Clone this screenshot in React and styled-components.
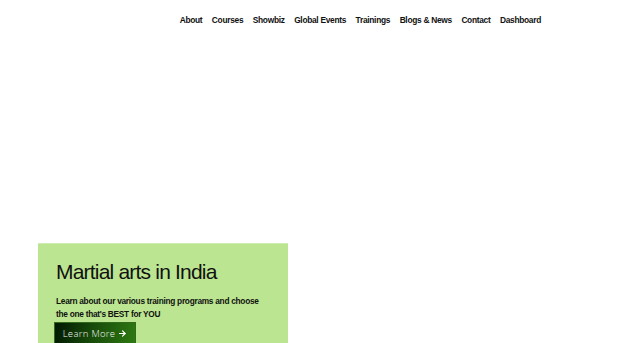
import React from "react";
import styled, { createGlobalStyle } from "styled-components";

const GlobalStyle = createGlobalStyle`
  html, body {
    margin: 0;
    padding: 0;
    background: #ffffff;
    font-family: "Liberation Sans", Arial, sans-serif;
    overflow: hidden;
  }
`;

const Page = styled.div`
  width: 620px;
  height: 343px;
  overflow: hidden;
`;

const Header = styled.header`
  height: 40px;
  display: flex;
  align-items: center;
  justify-content: flex-end;
  padding-right: 79px;
`;

const Nav = styled.nav`
  display: flex;
  gap: 9.5px;
`;

const NavLink = styled.a`
  font-size: 8.4px;
  font-weight: 700;
  letter-spacing: -0.3px;
  color: #111;
  text-decoration: none;
  cursor: pointer;
`;

const Hero = styled.section`
  padding: 203px 0 0 38px;
`;

const Card = styled.div`
  width: 250px;
  box-sizing: border-box;
  background: #bbe590;
  border-top: 1px solid #cdeeb0;
  padding: 14px 18px 0 18px;
  height: 120px;
`;

const Title = styled.h1`
  margin: 0;
  font-size: 21px;
  font-weight: 400;
  letter-spacing: -0.8px;
  color: #111;
  line-height: 28px;
`;

const Lead = styled.p`
  margin: 9px 0 0 0;
  font-size: 8.3px;
  font-weight: 700;
  letter-spacing: -0.27px;
  line-height: 13px;
  color: #111;
  width: 206px;
`;

const Button = styled.button`
  margin: 1px 0 0 -2px;
  width: 82px;
  height: 24px;
  border: 1px solid #2f6b1a;
  background: linear-gradient(100deg, #011801 0%, #174a0a 45%, #2e7a13 100%);
  color: #f4f4f4;
  font-family: "Open Sans", "Liberation Sans", sans-serif;
  font-size: 9.5px;
  font-weight: 300;
  letter-spacing: 0.3px;
  display: flex;
  align-items: center;
  justify-content: center;
  gap: 3px;
  padding: 0 0 2px 0;
  cursor: pointer;
`;

const links = [
  "About",
  "Courses",
  "Showbiz",
  "Global Events",
  "Trainings",
  "Blogs & News",
  "Contact",
  "Dashboard",
];

export default function App() {
  return (
    <Page>
      <GlobalStyle />
      <Header>
        <Nav>
          {links.map((l) => (
            <NavLink key={l}>{l}</NavLink>
          ))}
        </Nav>
      </Header>
      <Hero>
        <Card>
          <Title>Martial arts in India</Title>
          <Lead>
            Learn about our various training programs and choose the one that's
            BEST for YOU
          </Lead>
          <Button>
            Learn More
            <svg width="9" height="9" viewBox="0 0 24 24" fill="none" stroke="#fff" strokeWidth="3" strokeLinecap="round" strokeLinejoin="round">
              <path d="M4 12h15" />
              <path d="M12 5l7 7-7 7" />
            </svg>
          </Button>
        </Card>
      </Hero>
    </Page>
  );
}
